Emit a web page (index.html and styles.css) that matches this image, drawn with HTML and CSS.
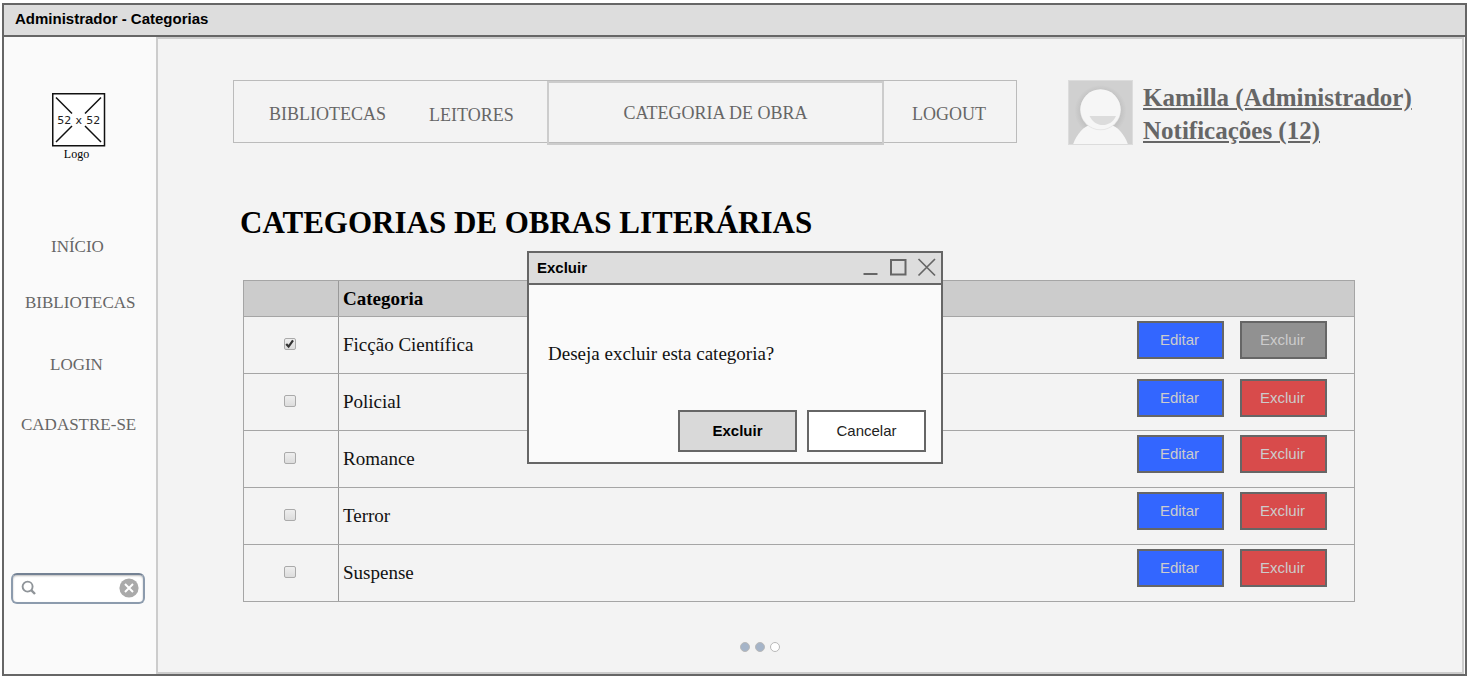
FILE: index.html
```html
<!DOCTYPE html>
<html lang="pt-BR">
<head>
<meta charset="utf-8">
<title>Administrador - Categorias</title>
<link rel="stylesheet" href="styles.css">
</head>
<body>
<div class="window">
  <header class="titlebar">Administrador - Categorias</header>
  <div class="body">
    <aside class="sidebar">
      <figure class="logo">
        <svg width="54" height="54" viewBox="0 0 54 54">
          <rect x="0.75" y="0.75" width="51.75" height="52" fill="#fff" stroke="#111" stroke-width="1.5"/>
          <path d="M4 4.500L20 20.500M49 4.500L33 20.500M4 49L20 33M49 49L33 33" stroke="#111" stroke-width="1.500"/>
          <text class="logo-size" x="26.700" y="31" text-anchor="middle">52 x 52</text>
        </svg>
        <figcaption>Logo</figcaption>
      </figure>
      <nav class="side-nav">
        <a class="side-home">INÍCIO</a>
        <a class="side-libraries">BIBLIOTECAS</a>
        <a class="side-login">LOGIN</a>
        <a class="side-signup">CADASTRE-SE</a>
      </nav>
      <div class="search">
        <svg width="16" height="16" viewBox="0 0 16 16" fill="none" stroke="#8f9499"><circle cx="6.600" cy="6.600" r="5" stroke-width="1.900"/><path d="M10.200 10.200L14 14" stroke-width="2.400"/></svg>
        <svg width="20" height="20" viewBox="0 0 20 20"><circle cx="10" cy="10" r="9.600" fill="#aaa"/><path d="M6 6L14 14M14 6L6 14" stroke="#fff" stroke-width="2"/></svg>
      </div>
    </aside>
    <main class="main">
      <div class="top">
        <nav class="menu">
          <a class="menu-libraries">BIBLIOTECAS</a>
          <a class="menu-readers">LEITORES</a>
          <a class="menu-active">CATEGORIA DE OBRA</a>
          <a class="menu-logout">LOGOUT</a>
        </nav>
        <svg class="avatar" width="65" height="65" viewBox="0 0 65 65">
          <defs>
            <radialGradient id="shade"><stop offset=".7" stop-color="#bebebe"/><stop offset="1" stop-color="#d0d0d0"/></radialGradient>
            <clipPath id="frame"><rect x="1" y="1" width="63" height="63"/></clipPath>
          </defs>
          <rect x=".5" y=".5" width="64" height="64" fill="#d0d0d0" stroke="#dcdcdc"/>
          <g clip-path="url(#frame)">
            <circle cx="32.500" cy="31" r="26" fill="url(#shade)"/>
            <path d="M4.500 66C8 55 15 46.500 23 44.500H42C50 46.500 57 55 60.500 66Z" fill="#f6f6f6"/>
            <circle cx="32.500" cy="30" r="20.300" fill="#e6e6e6"/>
            <circle cx="32.500" cy="29.300" r="20" fill="#f6f6f6"/>
            <path d="M21.500 36H48C45 42.500 40 45 34.700 45S25 42.500 21.500 36Z" fill="#dcdcdc"/>
          </g>
        </svg>
        <div class="user"><a>Kamilla (Administrador)</a><a>Notificações (12)</a></div>
      </div>
      <h1>CATEGORIAS DE OBRAS LITERÁRIAS</h1>
      <div class="table">
        <div class="row head"><div class="check"></div><div class="name">Categoria</div></div>
        <div class="row"><div class="check"><span class="box"><svg width="12" height="12" viewBox="0 0 12 12"><path d="M2.200 6L4.600 8.600L9 2.300" fill="none" stroke="#333" stroke-width="2.200"/></svg></span></div><div class="name">Ficção Científica</div><div class="actions"><button class="edit">Editar</button><button class="delete disabled">Excluir</button></div></div>
        <div class="row"><div class="check"><span class="box"></span></div><div class="name">Policial</div><div class="actions lower"><button class="edit">Editar</button><button class="delete">Excluir</button></div></div>
        <div class="row"><div class="check"><span class="box"></span></div><div class="name">Romance</div><div class="actions"><button class="edit">Editar</button><button class="delete">Excluir</button></div></div>
        <div class="row"><div class="check"><span class="box"></span></div><div class="name">Terror</div><div class="actions"><button class="edit">Editar</button><button class="delete">Excluir</button></div></div>
        <div class="row"><div class="check"><span class="box"></span></div><div class="name">Suspense</div><div class="actions"><button class="edit">Editar</button><button class="delete">Excluir</button></div></div>
      </div>
      <div class="pager"><i class="dot"></i><i class="dot"></i><i class="dot current"></i></div>
    </main>
  </div>
</div>
<section class="dialog">
  <header class="dialog-title">
    <span>Excluir</span>
    <svg width="74" height="20" viewBox="0 0 74 20" fill="none" stroke="#666" stroke-width="2"><path d="M0.500 17H14.500"/><rect x="28" y="3" width="14.500" height="14.500"/><path d="M55.500 2L72 18.500M72 2L55.500 18.500" stroke-width="1.700"/></svg>
  </header>
  <p>Deseja excluir esta categoria?</p>
  <div class="dialog-actions"><button class="confirm">Excluir</button><button class="cancel">Cancelar</button></div>
</section>
</body>
</html>
```
FILE: styles.css
```css
* { box-sizing: border-box; }
body {
  margin: 0;
  padding: 3px 0 0 2px;
  height: 677px;
  overflow: hidden;
  background: #fff;
  font-family: "Liberation Serif", "Times New Roman", serif;
  font-variant-ligatures: none;
}
button { padding: 0; font: 15px/20px "Liberation Sans", Arial, sans-serif; }

.window {
  display: flex;
  flex-direction: column;
  width: 1465px;
  height: 673px;
  border: 2px solid #666;
  background: #fafafa;
}
.titlebar {
  height: 32px;
  padding-left: 11px;
  border-bottom: 2px solid #666;
  background: #ddd;
  font: bold 15px/28px "Liberation Sans", Arial, sans-serif;
}
.body { display: flex; flex: 1; min-height: 0; }

.sidebar { width: 152px; }
.logo { width: 54px; height: 70px; margin: 56px 0 0 48px; }
.logo svg { display: block; }
.logo-size { font: 11px "DejaVu Sans", sans-serif; word-spacing: 0.7px; fill: #222; }
.logo figcaption { width: 49px; text-align: center; font-size: 12px; line-height: 14px; }
.side-nav { display: flex; flex-direction: column; margin-top: 74px; color: #666; font-size: 17px; line-height: 20px; }
.side-home { padding-left: 47px; }
.side-libraries { margin-top: 36px; padding-left: 21px; }
.side-login { margin-top: 42px; padding-left: 46px; }
.side-signup { margin-top: 40px; padding-left: 17px; }
.search {
  display: flex;
  align-items: center;
  justify-content: space-between;
  width: 134px;
  height: 31px;
  margin: 138px 0 0 7px;
  padding: 0 4px 1px 8px;
  border: 2px solid #8c9bad;
  border-top-color: #748294;
  border-radius: 6px;
  background: #fff;
  box-shadow: inset 0 1px 2px #bbb;
}

.main {
  width: 1308px;
  height: 637px;
  padding-top: 41px;
  border: 2px solid #ccc;
  background: #f3f3f3;
}
.top { display: flex; padding-left: 75px; }
.menu {
  display: flex;
  width: 784px;
  height: 63px;
  border: 1px solid #bbb;
  color: #666;
  font-size: 18px;
}
.menu-libraries { width: 160px; padding-left: 35px; line-height: 67px; }
.menu-readers { width: 153px; padding-left: 35px; line-height: 69px; }
.menu-active { width: 337px; height: 64px; border: 2px solid #ccc; text-align: center; line-height: 61px; }
.menu-logout { width: 130px; text-align: center; line-height: 67px; }
.avatar { margin-left: 51px; }
.user { display: flex; flex-direction: column; align-items: flex-start; padding: 1px 0 0 10px; color: #666; font-size: 25px; font-weight: bold; line-height: 33px; }
.user a { text-decoration: underline; }
h1 { margin: 58px 0 0 82px; font-size: 31px; line-height: 36px; }

.table { width: 1112px; margin: 39px 0 0 85px; border: 1px solid #a5a5a5; border-bottom: 0; color: #111; font-size: 19px; }
.row { display: flex; height: 57px; border-bottom: 1px solid #a5a5a5; line-height: 56px; }
.row.head { height: 36px; background: #ccc; color: #000; font-weight: bold; line-height: 35px; }
.check { display: flex; align-items: center; justify-content: center; width: 95px; border-right: 1px solid #999; padding: 0 2px 3px 0; }
.box { display: flex; width: 12px; height: 12px; border: 1px solid #aaa; border-radius: 2px; background: linear-gradient(#eee, #dcdcdc); }
.box svg { flex: none; margin: -1px; }
.name { width: 798px; padding-left: 4px; }
.actions { display: flex; gap: 16px; padding-top: 4px; }
.actions.lower { padding-top: 5px; }
.actions button { width: 87px; height: 38px; padding-right: 2px; border: 2px solid #666; color: #ccc; }
.edit { background: #36f; }
.delete { background: #d84b4b; }
.delete.disabled { background: #919191; }
.pager { display: flex; gap: 5px; margin: 40px 0 0 582px; }
.dot { width: 10px; height: 10px; border: 1px solid #b9b9b9; border-radius: 50%; background: #a5b4c8; }
.dot.current { background: #fff; }

.dialog { position: absolute; left: 527px; top: 251px; width: 416px; height: 213px; border: 2px solid #666; background: #fafafa; }
.dialog-title {
  display: flex;
  justify-content: space-between;
  height: 32px;
  padding: 4px 4px 0 8px;
  border-bottom: 2px solid #666;
  background: #ddd;
  font: bold 15px/22px "Liberation Sans", Arial, sans-serif;
}
.dialog p { margin: 57px 0 0 19px; font-size: 19px; line-height: 24px; color: #111; }
.dialog-actions { display: flex; gap: 10px; margin: 44px 0 0 149px; }
.dialog-actions button { width: 119px; height: 42px; border: 2px solid #666; }
.dialog-actions .confirm { background: #d9d9d9; color: #000; font-weight: bold; }
.dialog-actions .cancel { background: #fff; color: #222; }
```
